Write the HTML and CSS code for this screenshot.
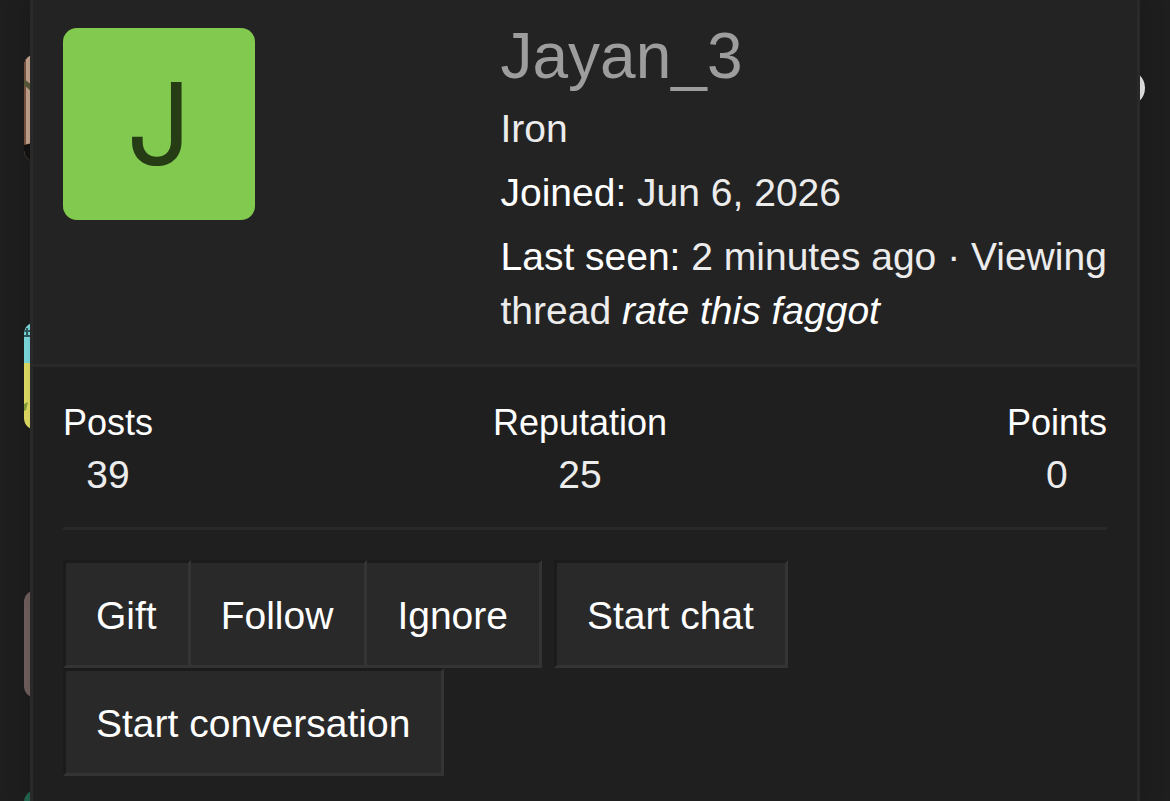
FILE: index.html
```html
<!DOCTYPE html>
<html lang="en">
<head>
  <meta charset="UTF-8" />
  <meta name="viewport" content="width=device-width, initial-scale=1.0"/>
  <title>Jayan_3</title>
  <link rel="stylesheet" href="styles.css">
</head>
<body>
  <!-- thread list under the member card -->
  <div class="thread-list" aria-hidden="true">
    <div class="thread-row">
      <svg class="thumb" viewBox="0 0 108 108">
        <rect width="108" height="108" fill="#cbaa92"/>
        <rect width="2" height="92" fill="#7b5642"/>
        <path d="M0 25l8 6v7l-8-7z" fill="#5c5d3d"/>
        <path d="M0 91l8-2v19H0z" fill="#131313"/>
      </svg>
      <span class="dot"></span>
    </div>
    <div class="thread-row">
      <svg class="thumb" viewBox="0 0 108 108">
        <rect width="108" height="41" fill="#80e2e6"/>
        <rect y="41" width="108" height="67" fill="#e9e668"/>
        <path d="M0 9h8M0 14h8M3 6v9" stroke="#315f64" stroke-width="2"/>
        <path d="M0 82l4-2-2 8-2 1z" fill="#8aa63b"/>
      </svg>
    </div>
    <div class="thread-row short">
      <div class="thumb mauve"></div>
    </div>
    <div class="thread-row last">
      <div class="thumb green"></div>
    </div>
  </div>

  <div class="member-card">
    <div class="card-header">
      <a class="avatar" href="#">J</a>
      <div class="details">
        <h4 class="name"><a href="#">Jayan_3</a></h4>
        <div class="blurb">Iron</div>
        <dl class="blurb">
          <dt>Joined:</dt>
          <dd>Jun 6, 2026</dd>
        </dl>
        <dl class="blurb">
          <dt>Last seen:</dt>
          <dd>2 minutes ago · Viewing thread <a href="#"><em>rate this faggot</em></a></dd>
        </dl>
      </div>
    </div>

    <div class="card-info">
      <div class="stats">
        <dl>
          <dt>Posts</dt>
          <dd>39</dd>
        </dl>
        <dl>
          <dt>Reputation</dt>
          <dd>25</dd>
        </dl>
        <dl>
          <dt>Points</dt>
          <dd>0</dd>
        </dl>
      </div>
      <hr />
      <div class="actions">
        <div class="button-group">
          <button type="button">Gift</button>
          <button type="button">Follow</button>
          <button type="button">Ignore</button>
        </div>
        <button type="button">Start chat</button>
        <button type="button">Start conversation</button>
      </div>
    </div>
  </div>
</body>
</html>
```

FILE: styles.css
```css
* {
  box-sizing: border-box;
}
body {
  margin: 0;
  position: relative;
  min-height: 100vh;
  background: #1e1e1e;
  color: #ececec;
  font-family: "Liberation Sans", Arial, Helvetica, sans-serif;
  font-size: 39px;
  line-height: 54px;
}
a {
  color: #fff;
  text-decoration: none;
}
dl, dd, h4 {
  margin: 0;
}
dt {
  color: #fff;
}

/* Thread list */
.thread-list {
  height: 100vh;
  padding: 54px 25px 0 24px;
  overflow: hidden;
}
.thread-row {
  display: flex;
  justify-content: space-between;
  height: 268px;
}
.thread-row.short {
  height: 200px;
}
.thread-row.last {
  height: 11px;
  overflow: hidden;
}
.thumb {
  width: 108px;
  height: 108px;
  border-radius: 12px;
}
.mauve {
  background: #756262;
}
.green {
  background: #236650;
}
.dot {
  width: 36px;
  height: 36px;
  margin-top: 16px;
  border-radius: 50%;
  background: #eee;
}

/* Member card */
.member-card {
  position: absolute;
  inset: 0 30px;
  border: solid #292929;
  border-width: 0 3px;
  background: #1f1f1f;
  box-shadow: 0 0 24px rgba(0,0,0,0.2);
}
.card-header {
  display: grid;
  grid-template-columns: 5fr 7fr;
  padding: 28px 24px 26px 30px;
  border-bottom: 3px solid #292929;
  background: #232323;
}
.avatar {
  display: flex;
  align-items: center;
  justify-content: center;
  width: 192px;
  height: 192px;
  border-radius: 14px;
  background: #82c94f;
  color: #263c15;
  font-family: Inter, sans-serif;
  font-size: 114px;
}
.name {
  font-size: 64px;
  font-weight: normal;
  line-height: 56px;
}
.name a {
  color: #9d9d9d;
}
.blurb {
  margin-top: 10px;
}
.name + .blurb {
  margin-top: 18px;
}
.blurb dt, .blurb dd {
  display: inline;
}

.card-info {
  padding: 30px;
}
.stats {
  display: flex;
  justify-content: space-between;
  text-align: center;
}
.stats dt {
  font-size: 36px;
  line-height: 51px;
}
hr {
  height: 3px;
  margin: 25px 0 30px;
  border: 0;
  background: #292929;
}
.actions {
  display: flex;
  flex-wrap: wrap;
  column-gap: 12px;
}
.button-group {
  display: flex;
}
button {
  height: 108px;
  padding: 4px 31px 0 30px;
  border: 3px solid;
  border-color: #1b1b1b #343434 #343434 #1b1b1b;
  background: #292929;
  color: #fff;
  font: inherit;
  cursor: pointer;
}
.button-group button + button {
  border-left: 0;
}
```
